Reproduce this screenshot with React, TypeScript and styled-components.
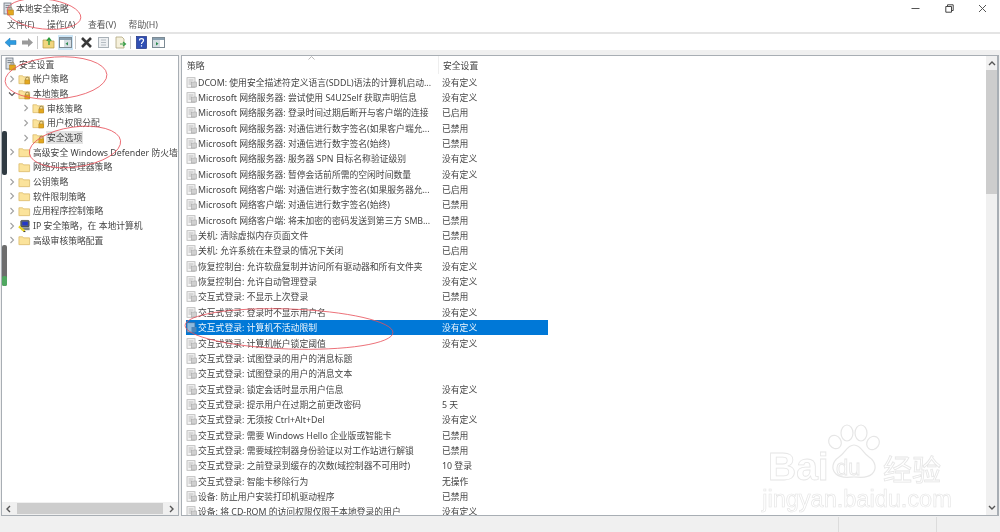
import React from "react";
import styled, { createGlobalStyle } from "styled-components";

const Global = createGlobalStyle`
  html, body { margin: 0; padding: 0; background: #fff; overflow: hidden; }
  * { box-sizing: border-box; }
`;

const Win = styled.div`
  position: relative;
  width: 1000px;
  height: 532px;
  overflow: hidden;
  display: flex;
  flex-direction: column;
  background: #fff;
  color: #333;
  font-family: "Noto Sans", "Noto Sans CJK SC", "Liberation Sans", sans-serif;
  font-size: 8.8px;
  filter: blur(0.5px);
`;
const TitleBar = styled.div`
  height: 17px;
  display: flex;
  align-items: center;
  padding-left: 2px;
  gap: 1px;
  flex: none;
`;
const Title = styled.span`
  color: #444;
  flex: 1;
`;
const WinButtons = styled.div`
  display: flex;
  align-items: center;
  gap: 24.5px;
  padding-right: 13px;
  height: 14px;
`;
const MenuBar = styled.div`
  height: 17px;
  flex: none;
  display: flex;
  align-items: center;
  padding: 0 0 0 7px;
  gap: 12.5px;
  border-bottom: 2px solid #e4e4e4;
`;
const MenuItem = styled.span`
  color: #555;
  font-size: 8.8px;
`;
const Toolbar = styled.div`
  height: 16px;
  flex: none;
  display: flex;
  align-items: center;
  padding-left: 2.5px;
  gap: 2px;
`;
const ToolBtn = styled.span<{ $active?: boolean }>`
  width: 15px;
  height: 15px;
  flex: none;
  display: flex;
  align-items: center;
  justify-content: center;
  background: ${(p) => (p.$active ? "#cde6f7" : "transparent")};
`;
const ToolSep = styled.span`
  width: 1px;
  height: 13px;
  flex: none;
  background: #c8c8c8;
  margin: 0 0.5px;
`;
const Body = styled.div`
  height: 467px;
  flex: none;
  display: flex;
  gap: 2px;
  background: #f0f0f0;
  padding: 5px 1px 1px 1px;
`;
const TreePane = styled.div`
  width: 178px;
  flex: none;
  display: flex;
  flex-direction: column;
  background: #fff;
  border: 1px solid #a8aeb4;
`;
const TreeList = styled.div`
  flex: 1;
  padding-top: 1px;
  overflow: hidden;
`;
const TreeRow = styled.div<{ $depth: number; $root?: boolean }>`
  height: 14.67px;
  display: flex;
  align-items: center;
  padding-left: ${(p) => (p.$root ? 2 : 6 + p.$depth * 14)}px;
  white-space: nowrap;
  color: #444;
  & > svg {
    flex: none;
  }
`;
const Chevron = styled.span`
  width: 10px;
  flex: none;
  display: flex;
  align-items: center;
`;
const TreeLabel = styled.span<{ $selected?: boolean }>`
  margin-left: 1px;
  padding: 0 1px;
  background: ${(p) => (p.$selected ? "#e4e4e4" : "transparent")};
`;
const HScroll = styled.div`
  height: 13px;
  flex: none;
  background: #f0f0f0;
  display: flex;
  align-items: center;
  justify-content: space-between;
  padding: 0 3px;
`;
const HThumb = styled.div`
  width: 146px;
  height: 11px;
  background: #cdcdcd;
`;
const ListPane = styled.div`
  flex: 1;
  min-width: 0;
  display: flex;
  background: #fff;
  border: 1px solid #a8aeb4;
  border-right-width: 2px;
`;
const ListMain = styled.div`
  flex: 1;
  min-width: 0;
  overflow: hidden;
  padding-left: 4px;
`;
const HeaderRow = styled.div`
  position: relative;
  height: 18px;
  display: grid;
  grid-template-columns: 252px 110px;
  align-items: center;
  color: #444;
  margin-bottom: 0.5px;
`;
const HeaderCell = styled.span<{ $divider?: boolean }>`
  padding-left: ${(p) => (p.$divider ? 4 : 1)}px;
  height: 100%;
  display: flex;
  align-items: center;
  border-left: ${(p) => (p.$divider ? "1px solid #eeeeee" : "none")};
`;
const SortMark = styled.span`
  position: absolute;
  left: 122px;
  top: 0;
  line-height: 0;
`;
const Row = styled.div<{ $selected?: boolean }>`
  height: 15.35px;
  width: 362px;
  display: grid;
  grid-template-columns: 252px 110px;
  align-items: center;
  white-space: nowrap;
  background: ${(p) => (p.$selected ? "#0078d7" : "transparent")};
  color: ${(p) => (p.$selected ? "#eef6fc" : "#444")};
`;
const NameCell = styled.span`
  display: flex;
  align-items: center;
  gap: 1px;
  overflow: hidden;
`;
const ValueCell = styled.span`
  padding-left: 4px;
`;
const VScroll = styled.div`
  width: 11px;
  flex: none;
  background: #f0f0f0;
  display: flex;
  flex-direction: column;
`;
const ArrowBox = styled.div`
  height: 14px;
  flex: none;
  display: flex;
  align-items: center;
  justify-content: center;
`;
const VThumb = styled.div`
  height: 124px;
  flex: none;
  background: #cdcdcd;
`;
const VSpace = styled.div`
  flex: 1;
`;
const StatusBar = styled.div`
  height: 15px;
  flex: none;
  background: #f0f0f0;
  display: flex;
  justify-content: flex-end;
`;
const StatusCell = styled.div<{ $w: number }>`
  width: ${(p) => p.$w}px;
  border-left: 1px solid #dcdcdc;
`;
const Overlay = styled.svg`
  position: absolute;
  left: 0;
  top: 0;
  pointer-events: none;
`;
const Strip = styled.div<{ $top: number; $h: number; $bg: string }>`
  position: absolute;
  left: 2px;
  width: 5px;
  top: ${(p) => p.$top}px;
  height: ${(p) => p.$h}px;
  background: ${(p) => p.$bg};
  border-radius: 2px;
`;
const Watermark = styled.div`
  position: absolute;
  left: 766px;
  top: 424px;
  width: 182px;
  display: flex;
  flex-direction: column;
  align-items: center;
  font-family: "Liberation Sans", sans-serif;
  color: transparent;
  -webkit-text-stroke: 0.8px #e6e6e6;
  pointer-events: none;
`;
const WaterTop = styled.div`
  height: 62px;
  width: 182px;
  position: relative;
  font-size: 39px;
  font-weight: 700;
  line-height: 36px;
`;
const Bai = styled.span`
  position: absolute;
  left: 2px;
  bottom: 1px;
`;
const Du = styled.span`
  position: absolute;
  left: 70px;
  bottom: 6px;
  font-size: 22px;
  line-height: 24px;
  font-weight: 400;
`;
const Jing = styled.span`
  position: absolute;
  left: 117px;
  bottom: 3px;
  font-family: "Noto Sans CJK SC", sans-serif;
  font-size: 29px;
  line-height: 30px;
  font-weight: 400;
`;
const Url = styled.div`
  font-size: 23.5px;
  line-height: 26px;
  white-space: nowrap;
  -webkit-text-stroke: 0.6px #e4e4e4;
`;
const PawSvg = styled.svg`
  position: absolute;
  left: 61px;
  top: 0;
`;

const Folder = ({ lock }: { lock?: boolean }) => (
  <svg width="13" height="12" viewBox="0 0 14 12">
    <path d="M1 2.5h4l1 1.2h6.5v7.3H1z" fill="#fbe39b" stroke="#d9b866" strokeWidth="0.8" />
    {lock && (
      <g>
        <path d="M8.2 7V5.8a1.8 1.8 0 0 1 3.6 0V7" fill="none" stroke="#8a7a4a" strokeWidth="0.9" />
        <rect x="7.4" y="7" width="5.2" height="4.4" fill="#e3a81f" stroke="#a9791a" strokeWidth="0.5" />
      </g>
    )}
  </svg>
);
const Chev = ({ open }: { open?: boolean }) => (
  <svg width="8" height="8" viewBox="0 0 8 8">
    <path d={open ? "M1 2.5l3 3 3-3" : "M2.5 1l3 3-3 3"} fill="none" stroke={open ? "#555" : "#a0a0a0"} strokeWidth="1.1" />
  </svg>
);
const PolicyIcon = () => (
  <svg width="11" height="11" viewBox="0 0 11 11" style={{ flex: "none" }}>
    <rect x="1" y="0.7" width="8" height="9.6" fill="#f4f4f4" stroke="#b5b5b5" strokeWidth="0.8" />
    <path d="M2.5 3h5M2.5 5h3M2.5 7h3" stroke="#a9a9a9" strokeWidth="0.8" />
    <rect x="5.5" y="5" width="5" height="5" fill="#d0d0d0" stroke="#9a9a9a" strokeWidth="0.5" />
  </svg>
);
const PolicyIconSel = () => (
  <svg width="11" height="11" viewBox="0 0 11 11" style={{ flex: "none" }}>
    <rect x="1" y="0.7" width="8" height="9.6" fill="#8db9dd" stroke="#3a6ea0" strokeWidth="0.8" />
    <rect x="5.5" y="5" width="5" height="5" fill="#4f86b8" />
  </svg>
);
const SecRoot = () => (
  <svg width="13" height="14" viewBox="0 0 13 14" style={{ flex: "none" }}>
    <rect x="2" y="1" width="7" height="11" fill="#d9dde2" stroke="#6d7680" strokeWidth="0.8" />
    <path d="M3.5 3.5h4M3.5 5.5h4" stroke="#6d7680" strokeWidth="0.8" />
    <rect x="5.5" y="8" width="6" height="5" fill="#e3a81f" stroke="#a9791a" strokeWidth="0.5" />
    <path d="M7 8V6.8a1.5 1.5 0 0 1 3 0V8" fill="none" stroke="#8a7a4a" strokeWidth="0.8" />
  </svg>
);
const IpIcon = () => (
  <svg width="13" height="14" viewBox="0 0 14 14">
    <rect x="3" y="1" width="9" height="7" rx="1" fill="#5d6770" stroke="#333" strokeWidth="0.7" />
    <rect x="4.6" y="2.4" width="6" height="4" fill="#2438c8" />
    <rect x="3.5" y="8.5" width="9" height="3" fill="#7c858c" />
    <path d="M1 7.5l6 5" stroke="#e8d21e" strokeWidth="2.4" />
    <path d="M6 13h2" stroke="#222" strokeWidth="1" />
  </svg>
);

const tree: { d: number; label: string; chev?: "r" | "o"; icon: "root" | "lock" | "plain" | "ip"; sel?: boolean }[] = [
  { d: 0, label: "安全设置", icon: "root" },
  { d: 0, label: "帐户策略", chev: "r", icon: "lock" },
  { d: 0, label: "本地策略", chev: "o", icon: "lock" },
  { d: 1, label: "审核策略", chev: "r", icon: "lock" },
  { d: 1, label: "用户权限分配", chev: "r", icon: "lock" },
  { d: 1, label: "安全选项", chev: "r", icon: "lock", sel: true },
  { d: 0, label: "高级安全 Windows Defender 防火墙", chev: "r", icon: "plain" },
  { d: 0, label: "网络列表管理器策略", icon: "plain" },
  { d: 0, label: "公钥策略", chev: "r", icon: "plain" },
  { d: 0, label: "软件限制策略", chev: "r", icon: "plain" },
  { d: 0, label: "应用程序控制策略", chev: "r", icon: "plain" },
  { d: 0, label: "IP 安全策略，在 本地计算机", chev: "r", icon: "ip" },
  { d: 0, label: "高级审核策略配置", chev: "r", icon: "plain" },
];

const rows: [string, string][] = [
  ["DCOM: 使用安全描述符定义语言(SDDL)语法的计算机启动...", "没有定义"],
  ["Microsoft 网络服务器: 尝试使用 S4U2Self 获取声明信息", "没有定义"],
  ["Microsoft 网络服务器: 登录时间过期后断开与客户端的连接", "已启用"],
  ["Microsoft 网络服务器: 对通信进行数字签名(如果客户端允...", "已禁用"],
  ["Microsoft 网络服务器: 对通信进行数字签名(始终)", "已禁用"],
  ["Microsoft 网络服务器: 服务器 SPN 目标名称验证级别", "没有定义"],
  ["Microsoft 网络服务器: 暂停会话前所需的空闲时间数量", "没有定义"],
  ["Microsoft 网络客户端: 对通信进行数字签名(如果服务器允...", "已启用"],
  ["Microsoft 网络客户端: 对通信进行数字签名(始终)", "已禁用"],
  ["Microsoft 网络客户端: 将未加密的密码发送到第三方 SMB...", "已禁用"],
  ["关机: 清除虚拟内存页面文件", "已禁用"],
  ["关机: 允许系统在未登录的情况下关闭", "已启用"],
  ["恢复控制台: 允许软盘复制并访问所有驱动器和所有文件夹", "没有定义"],
  ["恢复控制台: 允许自动管理登录", "没有定义"],
  ["交互式登录: 不显示上次登录", "已禁用"],
  ["交互式登录: 登录时不显示用户名", "没有定义"],
  ["交互式登录: 计算机不活动限制", "没有定义"],
  ["交互式登录: 计算机帐户锁定阈值", "没有定义"],
  ["交互式登录: 试图登录的用户的消息标题", ""],
  ["交互式登录: 试图登录的用户的消息文本", ""],
  ["交互式登录: 锁定会话时显示用户信息", "没有定义"],
  ["交互式登录: 提示用户在过期之前更改密码", "5 天"],
  ["交互式登录: 无须按 Ctrl+Alt+Del", "没有定义"],
  ["交互式登录: 需要 Windows Hello 企业版或智能卡", "已禁用"],
  ["交互式登录: 需要域控制器身份验证以对工作站进行解锁", "已禁用"],
  ["交互式登录: 之前登录到缓存的次数(域控制器不可用时)", "10 登录"],
  ["交互式登录: 智能卡移除行为", "无操作"],
  ["设备: 防止用户安装打印机驱动程序", "已禁用"],
  ["设备: 将 CD-ROM 的访问权限仅限于本地登录的用户", "没有定义"],
];

export default function App() {
  return (
    <Win>
      <Global />
      <TitleBar>
        <SecRoot />
        <Title>本地安全策略</Title>
        <WinButtons>
          <svg width="9" height="9" viewBox="0 0 9 9"><path d="M0.5 4.5h8" stroke="#555" strokeWidth="1" /></svg>
          <svg width="9" height="9" viewBox="0 0 9 9"><path d="M2.5 2.5V.8h5.7v5.7H6.5M.8 2.5h5.7v5.7H.8z" fill="none" stroke="#444" strokeWidth="1" /></svg>
          <svg width="9" height="9" viewBox="0 0 9 9"><path d="M1 1l7 7M8 1L1 8" stroke="#555" strokeWidth="1" /></svg>
        </WinButtons>
      </TitleBar>
      <MenuBar>
        <MenuItem>文件(F)</MenuItem>
        <MenuItem>操作(A)</MenuItem>
        <MenuItem>查看(V)</MenuItem>
        <MenuItem>帮助(H)</MenuItem>
      </MenuBar>
      <Toolbar>
        <ToolBtn>
          <svg width="13" height="11" viewBox="0 0 13 11"><path d="M6 1L1 5.5 6 10V7.5h6v-4H6z" fill="#2e9be0" stroke="#1f74b0" strokeWidth="0.5" /></svg>
        </ToolBtn>
        <ToolBtn>
          <svg width="13" height="11" viewBox="0 0 13 11"><path d="M7 1l5 4.5L7 10V7.5H1v-4h6z" fill="#9a9a9a" /></svg>
        </ToolBtn>
        <ToolSep />
        <ToolBtn>
          <svg width="13" height="13" viewBox="0 0 13 13"><path d="M1 4h4l1 1h6v7H1z" fill="#f1d67f" stroke="#b39848" strokeWidth="0.7" /><path d="M7 9V3M4.8 4.8L7 2l2.2 2.8" fill="none" stroke="#2c9c3a" strokeWidth="1.3" /></svg>
        </ToolBtn>
        <ToolBtn $active>
          <svg width="13" height="11" viewBox="0 0 13 11"><rect x="0.5" y="0.5" width="12" height="10" fill="#fff" stroke="#7c8a94" /><rect x="1" y="1" width="11" height="2" fill="#8aa0b0" /><rect x="5" y="3" width="7" height="7" fill="#d6dde2" /><path d="M9 5L6.5 6.8 9 8.6z" fill="#2c8a50" /></svg>
        </ToolBtn>
        <ToolSep />
        <ToolBtn>
          <svg width="13" height="13" viewBox="0 0 13 13"><path d="M2 2l9 9M11 2l-9 9" stroke="#3a3a3a" strokeWidth="2.6" /></svg>
        </ToolBtn>
        <ToolBtn>
          <svg width="13" height="13" viewBox="0 0 13 13"><rect x="1.5" y="1.5" width="10" height="10" fill="#eef0f2" stroke="#a8b0b6" /><path d="M4 4h5M4 6.5h5M4 9h5" stroke="#b5bcc2" /></svg>
        </ToolBtn>
        <ToolBtn>
          <svg width="13" height="13" viewBox="0 0 13 13"><path d="M2 1h6l2 2v9H2z" fill="#f6f1dc" stroke="#b0a67e" strokeWidth="0.8" /><path d="M6 8h5M9 6l2.5 2L9 10" fill="none" stroke="#3aa04a" strokeWidth="1.2" /></svg>
        </ToolBtn>
        <ToolSep />
        <ToolBtn>
          <svg width="11" height="13" viewBox="0 0 11 13"><rect x="0.5" y="0.5" width="10" height="12" fill="#2f4fb4" stroke="#1c3080" strokeWidth="0.7" /><path d="M3.5 4.5c0-2.4 4-2.4 4 0 0 1.6-2 1.6-2 3.4M5.5 9.2v1.4" fill="none" stroke="#fff" strokeWidth="1.2" /></svg>
        </ToolBtn>
        <ToolBtn>
          <svg width="13" height="11" viewBox="0 0 13 11"><rect x="0.5" y="0.5" width="12" height="10" fill="#fff" stroke="#7c8a94" /><rect x="1" y="1" width="11" height="2" fill="#8aa0b0" /><rect x="1" y="3" width="7" height="7" fill="#d6dde2" /><path d="M4 5l2.5 1.8L4 8.6z" fill="#2c8a50" /></svg>
        </ToolBtn>
      </Toolbar>
      <Body>
        <TreePane>
          <TreeList>
            {tree.map((t) => (
              <TreeRow key={t.label} $depth={t.d} $root={t.icon === "root"}>
                {t.icon !== "root" && <Chevron>{t.chev && <Chev open={t.chev === "o"} />}</Chevron>}
                {t.icon === "root" && <SecRoot />}
                {t.icon === "lock" && <Folder lock />}
                {t.icon === "plain" && <Folder />}
                {t.icon === "ip" && <IpIcon />}
                <TreeLabel $selected={t.sel}>{t.label}</TreeLabel>
              </TreeRow>
            ))}
          </TreeList>
          <HScroll>
            <svg width="7" height="8" viewBox="0 0 7 8"><path d="M5 1L2 4l3 3" fill="none" stroke="#555" strokeWidth="1.4" /></svg>
            <HThumb />
            <svg width="7" height="8" viewBox="0 0 7 8"><path d="M2 1l3 3-3 3" fill="none" stroke="#555" strokeWidth="1.4" /></svg>
          </HScroll>
        </TreePane>
        <ListPane>
          <ListMain>
            <HeaderRow>
              <HeaderCell>策略</HeaderCell>
              <HeaderCell $divider>安全设置</HeaderCell>
              <SortMark>
                <svg width="7" height="4" viewBox="0 0 7 4"><path d="M.5 3.5l3-3 3 3" fill="none" stroke="#aaa" strokeWidth="0.8" /></svg>
              </SortMark>
            </HeaderRow>
            {rows.map(([name, val], i) => (
              <Row key={name} $selected={i === 16}>
                <NameCell>
                  {i === 16 ? <PolicyIconSel /> : <PolicyIcon />}
                  <span>{name}</span>
                </NameCell>
                <ValueCell>{val}</ValueCell>
              </Row>
            ))}
          </ListMain>
          <VScroll>
            <ArrowBox>
              <svg width="8" height="6" viewBox="0 0 8 6"><path d="M1 5l3-3 3 3" fill="none" stroke="#555" strokeWidth="1.4" /></svg>
            </ArrowBox>
            <VThumb />
            <VSpace />
            <ArrowBox>
              <svg width="8" height="6" viewBox="0 0 8 6"><path d="M1 1l3 3 3-3" fill="none" stroke="#555" strokeWidth="1.4" /></svg>
            </ArrowBox>
          </VScroll>
        </ListPane>
      </Body>
      <StatusBar>
        <StatusCell $w={98} />
        <StatusCell $w={64} />
      </StatusBar>

      <Strip $top={131} $h={44} $bg="#2f3a42" />
      <Strip $top={245} $h={41} $bg="#6d6d6d" />
      <Strip $top={276} $h={10} $bg="#4fa860" />

      <Watermark>
        <WaterTop>
          <Bai>Bai</Bai>
          <PawSvg width="56" height="60" viewBox="0 0 56 60">
            <g fill="#fff" stroke="#e6e6e6" strokeWidth="1.2">
              <ellipse cx="8" cy="18" rx="6" ry="7" transform="rotate(-35 8 18)" />
              <ellipse cx="20" cy="9" rx="6" ry="8" />
              <ellipse cx="34" cy="9" rx="6" ry="8" />
              <ellipse cx="46" cy="19" rx="6" ry="7" transform="rotate(35 46 19)" />
              <path d="M27 21c7 0 9 8 15 12 7 5 8 12 3 17-5 5-13 3-18 3s-13 2-18-3c-5-5-4-12 3-17 6-4 8-12 15-12z" />
            </g>
          </PawSvg>
          <Du>du</Du>
          <Jing>经验</Jing>
        </WaterTop>
        <Url>jingyan.baidu.com</Url>
      </Watermark>

      <Overlay width="1000" height="532" viewBox="0 0 1000 532" fill="none" stroke="#e8505a" strokeWidth="0.8">
        <ellipse cx="44" cy="14" rx="37" ry="15" transform="rotate(6 44 14)" />
        <ellipse cx="56" cy="78" rx="51" ry="21" transform="rotate(-4 56 78)" />
        <ellipse cx="75" cy="147" rx="46" ry="20" transform="rotate(-8 75 147)" />
        <ellipse cx="289" cy="329" rx="104" ry="20" transform="rotate(2 289 329)" />
      </Overlay>
    </Win>
  );
}
